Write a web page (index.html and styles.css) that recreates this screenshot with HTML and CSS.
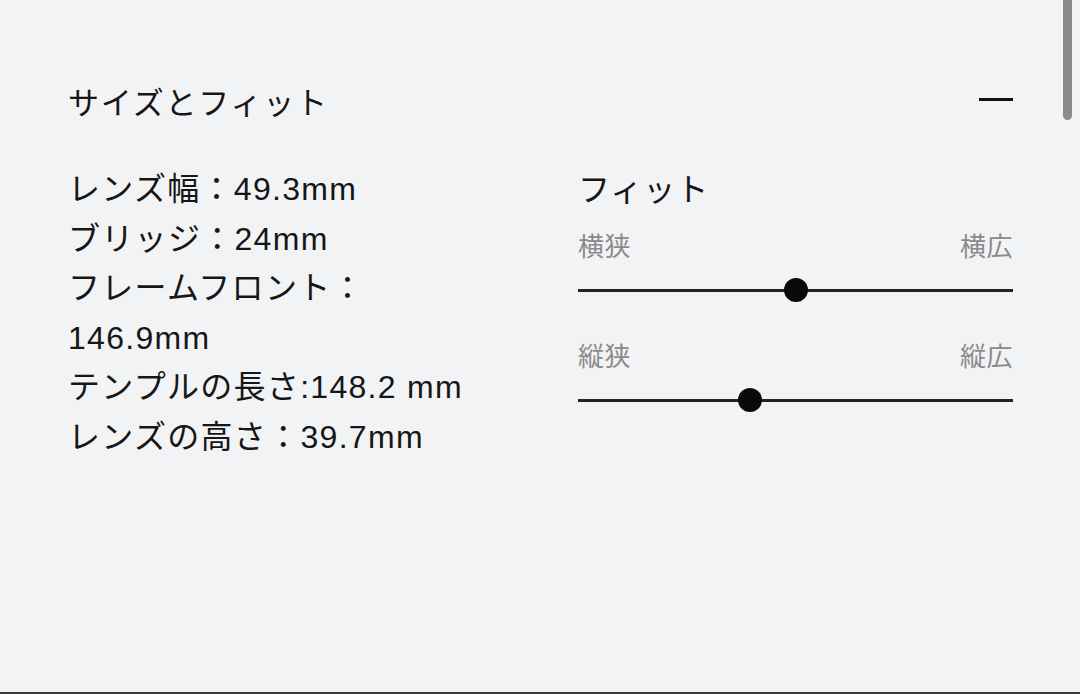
FILE: index.html
```html
<!DOCTYPE html>
<html lang="ja">
<head>
<meta charset="utf-8">
<title>サイズとフィット</title>
<link rel="stylesheet" href="styles.css">
</head>
<body>
<div class="page">
  <section class="panel">
    <header class="panel-head">
      <h2 class="panel-title">サイズとフィット</h2>
      <button class="collapse" aria-label="閉じる"><span class="minus"></span></button>
    </header>
    <div class="panel-body">
      <ul class="specs">
        <li>レンズ幅：49.3mm</li>
        <li>ブリッジ：24mm</li>
        <li>フレームフロント：146.9mm</li>
        <li>テンプルの長さ:148.2 mm</li>
        <li>レンズの高さ：39.7mm</li>
      </ul>
      <div class="fit">
        <div class="fit-title">フィット</div>
        <div class="fit-labels"><span>横狭</span><span>横広</span></div>
        <div class="slider"><span class="thumb" style="left: 50.1%"></span></div>
        <div class="fit-labels second"><span>縦狭</span><span>縦広</span></div>
        <div class="slider"><span class="thumb" style="left: 39.5%"></span></div>
      </div>
    </div>
  </section>
  <div class="scrollbar"></div>
</div>
</body>
</html>
```

FILE: styles.css
```css
* { box-sizing: border-box; }

html, body {
  margin: 0;
  padding: 0;
  background: #f2f3f5;
}

body {
  font-family: "Liberation Sans", "Noto Sans CJK JP", sans-serif;
  color: #161616;
}

.page {
  position: relative;
  height: 694px;
  border-bottom: 2px solid #3a3a3c;
  overflow: hidden;
  padding: 84px 67px 0 68px;
}

.panel-head {
  display: flex;
  align-items: center;
  justify-content: space-between;
  height: 40px;
}

.panel-title {
  margin: 0;
  font-size: 31px;
  font-weight: 400;
  line-height: 40px;
  letter-spacing: 1.8px;
}

.collapse {
  border: 0;
  background: none;
  padding: 0;
  width: 34px;
  height: 40px;
  display: flex;
  align-items: center;
  margin-top: -9px;
}

.minus {
  display: block;
  width: 34px;
  height: 3px;
  background: #111;
}

.panel-body {
  display: grid;
  grid-template-columns: 410px 1fr;
  column-gap: 100px;
  margin-top: 41px;
}

.specs {
  list-style: none;
  margin: 0;
  padding: 0;
  font-size: 32px;
  line-height: 49.6px;
  letter-spacing: 1.3px;
}

.fit-title {
  font-size: 32px;
  line-height: 50px;
  letter-spacing: 1px;
}

.fit-labels {
  display: flex;
  justify-content: space-between;
  font-size: 26px;
  line-height: 36px;
  color: #8a8a8c;
  margin-top: 14px;
  letter-spacing: 0.5px;
}

.fit-labels.second {
  margin-top: 37px;
}

.slider {
  position: relative;
  height: 24px;
  margin-top: 13px;
}

.slider::before {
  content: "";
  position: absolute;
  left: 0;
  right: 0;
  top: 11px;
  height: 2.5px;
  background: #222;
}

.thumb {
  position: absolute;
  top: 0;
  width: 24px;
  height: 24px;
  margin-left: -12px;
  border-radius: 50%;
  background: #0a0a0a;
}

.scrollbar {
  position: absolute;
  top: -10px;
  right: 8px;
  width: 9px;
  height: 130px;
  border-radius: 5px;
  background: #8a8a8a;
}
```
